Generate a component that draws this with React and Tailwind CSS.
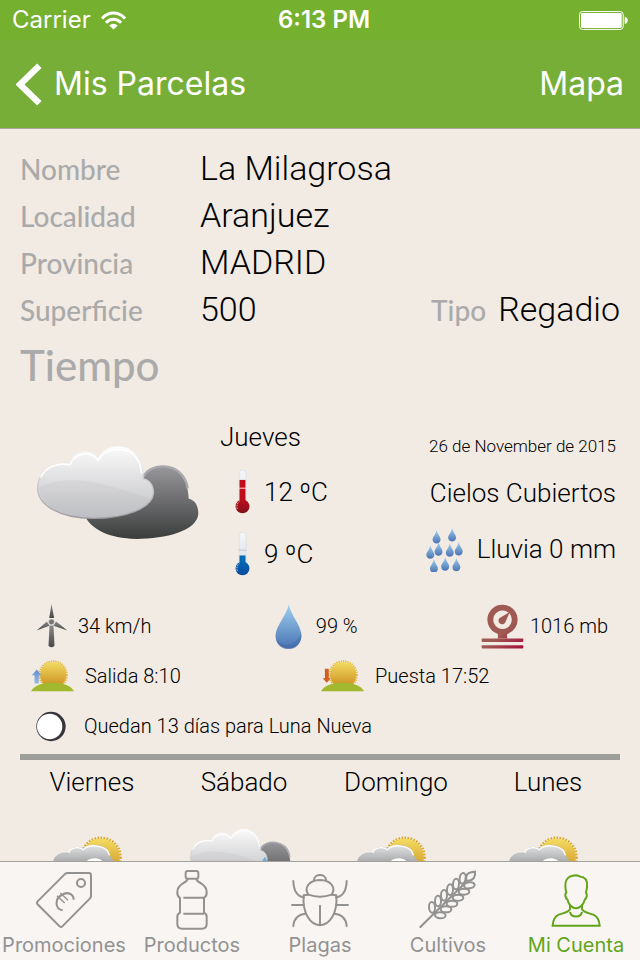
import React from "react";

const fields = [
  { label: "Nombre", value: "La Milagrosa" },
  { label: "Localidad", value: "Aranjuez" },
  { label: "Provincia", value: "MADRID" },
  { label: "Superficie", value: "500", extra: { label: "Tipo", value: "Regadio" } },
];

const forecast = [
  { day: "Viernes", icon: "sun" },
  { day: "Sábado", icon: "rain" },
  { day: "Domingo", icon: "sun" },
  { day: "Lunes", icon: "sun" },
];

const tabs = [
  { name: "Promociones", Icon: TagIcon },
  { name: "Productos", Icon: BottleIcon },
  { name: "Plagas", Icon: BugIcon },
  { name: "Cultivos", Icon: WheatIcon },
  { name: "Mi Cuenta", Icon: UserIcon, active: true },
];

// All the gradients of the page, declared once
function Gradients() {
  const list = [
    ["cloudLight", "#fafafa", "#bfc0c3"],
    ["cloudDark", "#98979b", "#3b3d3c"],
    ["cloudEdge", "#ffffff", "#9b9aa0"],
    ["cloudGray", "#e2e3e4", "#98999b"],
    ["sunDisc", "#f3dc62", "#c98a1c"],
    ["drop", "#9fd0ef", "#4a74b4"],
    ["glass", "#f4f7fa", "#d9e0e8"],
    ["red", "#c00d1c", "#7c1219"],
    ["blue", "#0468b4", "#0b4a9c"],
    ["arrow", "#5f90cc", "#93bbe6"],
    ["steel", "#8a898c", "#48484a"],
  ];
  return (
    <svg className="absolute h-0 w-0" aria-hidden="true">
      <defs>
        {list.map(([id, from, to]) => (
          <linearGradient key={id} id={id} x1="0" y1="0" x2="0" y2="1">
            <stop offset="0" stopColor={from} />
            <stop offset="1" stopColor={to} />
          </linearGradient>
        ))}
        <linearGradient id="gauge" gradientUnits="userSpaceOnUse" x1="60" y1="40" x2="168" y2="175">
          <stop offset="0.55" stopColor="#a05a54" />
          <stop offset="1" stopColor="#a30d3a" />
        </linearGradient>
      </defs>
    </svg>
  );
}

/* Weather */
function CloudShapes() {
  return (
    <>
      <path
        d="M366 182 C376 118 505 112 508 236 C528 240 537 258 537 282 C533 332 440 357 350 357 C268 356 214 328 193 285 Z"
        fill="url(#cloudDark)"
      />
      <path
        d="M372 170 C388 126 494 120 505 205"
        fill="none"
        stroke="#a9a8ae"
        strokeWidth="7"
      />
      <path
        d="M53 205 C53 160 92 121 149 129 C160 92 214 84 234 115 C262 62 371 60 371 176 C388 178 402 194 402 218 C400 264 318 295 220 295 C120 295 53 255 53 205Z"
        fill="url(#cloudLight)"
        stroke="url(#cloudEdge)"
        strokeWidth="4"
      />
      <path
        d="M57 203 C100 178 170 174 240 190 C310 208 350 222 398 236 C384 270 310 291 220 291 C125 291 60 252 57 203Z"
        fill="#b9babd"
        opacity="0.2"
      />
      <path
        d="M62 172 C76 142 108 126 151 133 C162 98 214 89 234 120 C266 70 362 72 366 160"
        fill="none"
        stroke="#fff"
        strokeWidth="5"
      />
    </>
  );
}

function CloudyIcon() {
  return (
    <svg viewBox="51 74 488 286" className="h-[95px] w-[162px]">
      <CloudShapes />
    </svg>
  );
}

function RainyIcon() {
  return (
    <svg viewBox="41 74 515 350" className="h-[77px] w-[113px]">
      <CloudShapes />
      <path d="M391 206 q-20 24 -10 38 q12 10 22 -2 q6 -12 -12 -36Z" fill="#6aaee6" />
    </svg>
  );
}

function SunnyCloudIcon() {
  return (
    <svg viewBox="155 234 243 216" className="h-[72px] w-[81px]">
      <circle
        cx="302"
        cy="322"
        r="58"
        fill="none"
        stroke="#dba92a"
        strokeWidth="9"
        strokeDasharray="5 4"
      />
      <circle cx="302" cy="322" r="56" fill="url(#sunDisc)" />
      <path
        d="M159 336 C162 316 182 306 205 310 C212 290 236 288 249 297 C266 278 326 282 328 318 C334 322 340 334 338 350 H180 Z"
        fill="url(#cloudGray)"
        stroke="#aeb0b3"
        strokeWidth="2"
      />
      <path
        d="M205 309 C212 291 236 289 249 299 C266 280 322 284 327 316"
        fill="none"
        stroke="#fff"
        strokeWidth="4"
      />
      <path d="M255 340 C262 320 304 320 310 340 Z" fill="#fff" />
    </svg>
  );
}

function Thermometer({ hot }) {
  return (
    <svg viewBox="74 150 44 133" className="h-11 w-[15px]">
      <rect x="86" y="151" width="21" height="100" rx="9" fill="url(#glass)" stroke="#cfd8e2" strokeWidth="1.5" />
      <rect x="87" y={hot ? 180 : 221} width="18" height={hot ? 66 : 25} fill={hot ? "#c00d1c" : "#0468b4"} />
      <circle cx="96" cy="260" r="21" fill={hot ? "url(#red)" : "url(#blue)"} />
      <path d="M84 205 H108" stroke={hot ? "#f0d8d8" : "#c3cad3"} strokeWidth="3" />
      <path d="M80 268 C77 258 80 250 87 244" fill="none" stroke="#fff" strokeWidth="2" strokeDasharray="5 3" />
    </svg>
  );
}

const drops = [
  [90, 325], [137, 319], [71, 371], [96, 362], [130, 365], [157, 361], [82, 413], [116, 407], [150, 409],
];

function RainIcon() {
  return (
    <svg viewBox="58 316 112 136" className="h-[45px] w-[37px]">
      {drops.map(([x, y]) => (
        <path
          key={x}
          d={`M${x} ${y} C${x + 3} ${y + 14} ${x + 12} ${y + 20} ${x + 12} ${y + 29} C${x + 12} ${y + 45} ${x - 12} ${y + 45} ${x - 12} ${y + 29} C${x - 12} ${y + 20} ${x - 2} ${y + 14} ${x} ${y}Z`}
          fill="url(#drop)"
        />
      ))}
    </svg>
  );
}

function WindIcon() {
  return (
    <svg viewBox="50 42 95 133" className="h-11 w-8">
      <path d="M90 107 H102 L105 168 Q96 178 87 168 Z" fill="url(#steel)" />
      <path d="M96 42 L104 84 H89 Z" fill="url(#steel)" />
      <path d="M51 122 L82 95 L90 108 Z" fill="url(#steel)" />
      <path d="M144 122 L110 95 L102 108 Z" fill="url(#steel)" />
      <circle cx="96" cy="96" r="9" fill="#77767a" stroke="#e8e3df" strokeWidth="2" />
    </svg>
  );
}

function DropIcon() {
  return (
    <svg viewBox="47 40 80 135" className="h-[45px] w-[27px]">
      <path
        d="M88 41 C93 74 126 104 126 136 C125 160 108 174 87 174 C66 174 49 160 48 136 C48 106 82 74 88 41Z"
        fill="url(#drop)"
      />
      <path d="M49 142 C62 170 106 172 125 128 C130 190 54 190 49 142Z" fill="#3c65a4" opacity="0.4" />
    </svg>
  );
}

function GaugeIcon() {
  return (
    <svg viewBox="40 40 130 135" className="h-[45px] w-[43px]">
      <g fill="url(#gauge)">
        <path d="M105 42 a45 45 0 0 1 14 88 V144 H91 V130 a45 45 0 0 1 14 -88Z M105 59 a28 28 0 1 0 0.1 0Z" fillRule="evenodd" />
        <path d="M127 64 L114 94 A11 11 0 1 1 99 80 Z" />
        <rect x="42" y="144" width="126" height="10" rx="3" />
        <rect x="42" y="164" width="126" height="10" rx="3" />
      </g>
    </svg>
  );
}

function HorizonIcon({ rising }) {
  return (
    <svg viewBox="28 210 136 98" className="h-8 w-[45px]">
      <circle cx="98" cy="256" r="42" fill="none" stroke="#e3b734" strokeWidth="6" strokeDasharray="4 3" />
      <circle cx="98" cy="256" r="40" fill="url(#sunDisc)" />
      <path d="M30 306 C38 290 62 280 96 279 C130 280 154 290 162 306Z" fill="#a2b92f" />
      {rising ? (
        <path d="M48 239 L62 257 H54 V282 H41 V257 H33 Z" fill="url(#arrow)" />
      ) : (
        <path d="M48 280 L35 266 H42 V237 H54 V266 H60 Z" fill="#d0601f" />
      )}
    </svg>
  );
}

function MoonIcon() {
  return (
    <svg viewBox="50 362 90 92" className="h-[31px] w-[30px]">
      <circle cx="95" cy="408" r="44" fill="#35353b" />
      <circle cx="91" cy="408" r="38" fill="#fff" />
    </svg>
  );
}

/* Tab bar */
function TagIcon() {
  return (
    <svg viewBox="102 30 180 180" className="size-[60px]" fill="none" stroke="currentColor" strokeWidth="6">
      <path d="M112 125 L196 41 Q199 39 203 39 H266 Q273 39 273 46 V108 Q273 112 270 115 L187 199 Q183 203 179 199 L112 132 Q109 129 112 125Z" />
      <circle cx="243" cy="69" r="12" />
      <path d="M188 151 C164 146 164 116 185 105 C203 93 221 102 221 119" />
      <path d="M171 107 L194 129 M181 99 L204 121" strokeWidth="4" />
    </svg>
  );
}

function BottleIcon() {
  return (
    <svg viewBox="483 30 180 180" className="size-[60px]" fill="none" stroke="currentColor" strokeWidth="6">
      <rect x="554" y="33" width="38" height="23" rx="6" />
      <path d="M560 57 C558 70 529 70 529 96 Q528 108 537 114 V158 Q528 162 529 172 V192 Q529 206 543 206 H603 Q617 206 617 192 V172 Q618 162 609 158 V114 Q618 108 617 96 C617 70 588 70 586 57" />
      <path d="M547 113 H609 M547 161 H609" />
    </svg>
  );
}

function BugIcon() {
  return (
    <svg viewBox="870 30 180 180" className="size-[60px]" fill="none" stroke="currentColor" strokeWidth="6" strokeLinecap="round">
      <path d="M925 104 C912 84 925 61 960 60 C995 61 1008 84 995 104 C972 112 948 112 925 104Z" />
      <path d="M942 60 C943 40 977 40 978 60" />
      <path d="M911 106 Q918 104 925 104 M995 104 Q1002 104 1009 106 M911 106 C907 160 930 194 960 196 C990 194 1013 160 1009 106" />
      <path d="M960 137 V194" />
      <path d="M880 63 C881 94 892 109 911 112 M876 135 H911 M880 198 C882 172 896 163 917 161" />
      <path d="M1040 63 C1039 94 1028 109 1009 112 M1044 135 H1009 M1040 198 C1038 172 1024 163 1003 161" />
    </svg>
  );
}

const grains = [
  [338, 262, -4], [356, 243, 0], [374, 226, 0], [392, 209, 2], [410, 192, 4], [430, 175, 8],
  [363, 286, 94], [380, 268, 92], [398, 251, 90], [416, 233, 90], [434, 215, 88], [450, 196, 82],
];

function WheatIcon() {
  return (
    <svg viewBox="296 150 180 180" className="size-[60px]" fill="none" stroke="currentColor" strokeWidth="6" strokeLinecap="round">
      <path d="M303 321 L440 186" />
      {grains.map(([x, y, turn]) => (
        <ellipse key={x} cx={x} cy={y} rx="9" ry="16" transform={`rotate(${turn} ${x} ${y})`} fill="#f8f5f2" />
      ))}
      <path d="M441 182 C437 164 446 156 467 155 C468 174 460 184 441 182Z" fill="#f8f5f2" />
    </svg>
  );
}

function UserIcon() {
  return (
    <svg viewBox="678 150 180 180" className="size-[60px]" fill="none" stroke="currentColor" strokeWidth="6">
      <path d="M739 218 C731 185 738 168 768 166 C780 168 783 172 790 172 C803 178 804 195 798 218 C803 222 800 234 795 238 C790 256 778 265 768 265 C758 265 746 256 742 238 C736 234 733 222 739 218Z" />
      <path d="M750 256 V268 C748 276 728 280 716 284 C702 290 699 302 698 317 H839 C838 302 834 290 820 284 C808 280 788 276 786 268 V256" />
      <path d="M750 276 C754 294 782 294 786 276" />
    </svg>
  );
}

function StatusBar() {
  return (
    <div className="relative flex h-10 items-center justify-between bg-[#75b02f] px-3 text-[24px]">
      <div className="flex items-center gap-2.5">
        <span>Carrier</span>
        <svg viewBox="300 32 76 56" className="h-[19px] w-[25px]" fill="none" stroke="currentColor" strokeWidth="9">
          <path d="M303 54 C323 32 353 32 373 54" />
          <path d="M315 67 C328 53 348 53 361 67" />
          <path d="M325 75 Q338 64 351 75 L338 87Z" fill="currentColor" stroke="none" />
        </svg>
      </div>
      <span className="absolute inset-x-0 text-center font-semibold">
        <span className="pl-2">6:13 PM</span>
      </span>
      <svg viewBox="780 33 148 57" className="h-[19px] w-[49px]">
        <rect x="781.5" y="34.5" width="132" height="54" rx="9" fill="none" stroke="#fff" strokeWidth="3" />
        <rect x="786" y="39" width="123" height="45" rx="4" fill="#fff" />
        <path d="M918 50 q9 2 9 11 t-9 11Z" fill="#fff" />
      </svg>
    </div>
  );
}

function Stat({ icon, text, gap = "gap-2.5" }) {
  return (
    <div className={`flex items-center ${gap}`}>
      {icon}
      <span>{text}</span>
    </div>
  );
}

export default function App() {
  return (
    <div className="flex h-screen flex-col bg-[#f2ebe4] font-['Inter',sans-serif] text-black">
      <Gradients />
      <header className="border-b border-[#a9a79f] bg-[#77ae38] text-white">
        <StatusBar />
        <nav className="flex h-[88px] items-center justify-between px-4 text-[32px]">
          <button className="flex items-center gap-3">
            <svg viewBox="50 188 78 128" className="h-[43px] w-[26px]" fill="none" stroke="currentColor" strokeWidth="19">
              <path d="M120 196 L62 252 L120 308" />
            </svg>
            Mis Parcelas
          </button>
          <button>Mapa</button>
        </nav>
      </header>

      <main className="min-h-0 flex-1 overflow-y-auto font-['Roboto',sans-serif] font-light [scrollbar-width:none]">
        {/* Parcel */}
        <dl className="px-5 pt-4">
          {fields.map((field) => (
            <div key={field.label} className="flex h-[47px] items-center">
              <dt className="w-[180px] font-['Lato',sans-serif] text-[28px] font-medium text-[#aaaaaa]">
                {field.label}
              </dt>
              <dd className="text-[34px]">{field.value}</dd>
              {field.extra && (
                <div className="ml-auto flex items-center gap-3">
                  <dt className="font-['Lato',sans-serif] text-[28px] font-medium text-[#aaaaaa]">
                    {field.extra.label}
                  </dt>
                  <dd className="text-[34px]">{field.extra.value}</dd>
                </div>
              )}
            </div>
          ))}
        </dl>
        <h2 className="flex h-16 items-center px-5 font-['Lato',sans-serif] text-[42px] font-medium text-[#aaaaaa]">
          Tiempo
        </h2>

        {/* Today */}
        <section className="flex pt-4 pr-6 pl-5 text-[26px]">
          <div className="w-[200px] pt-8 pl-[17px]">
            <CloudyIcon />
          </div>
          <div>
            <h3 className="flex h-12 items-center">Jueves</h3>
            <p className="flex h-[62px] items-center gap-[14px] pl-[15px]">
              <Thermometer hot /> 12 ºC
            </p>
            <p className="flex h-[62px] items-center gap-[14px] pl-[15px]">
              <Thermometer /> 9 ºC
            </p>
          </div>
          <div className="ml-auto flex flex-col items-end pt-2">
            <p className="flex h-12 items-center pt-1 text-[17px]">26 de November de 2015</p>
            <p className="flex h-12 items-center">Cielos Cubiertos</p>
            <p className="flex h-16 items-center gap-3.5">
              <RainIcon /> Lluvia 0 mm
            </p>
          </div>
        </section>

        <section className="pt-4 text-[20px]">
          <div className="flex h-[50px] items-center justify-between pr-8 pl-9">
            <Stat icon={<WindIcon />} text="34 km/h" />
            <Stat icon={<DropIcon />} text="99 %" gap="gap-3.5" />
            <Stat icon={<GaugeIcon />} text="1016 mb" gap="gap-1.5" />
          </div>
          <div className="grid h-[50px] grid-cols-2 items-center px-[30px]">
            <Stat icon={<HorizonIcon rising />} text="Salida 8:10" />
            <Stat icon={<HorizonIcon />} text="Puesta 17:52" />
          </div>
          <div className="flex h-[50px] items-center gap-[18px] pl-9">
            <MoonIcon />
            <span>Quedan 13 días para Luna Nueva</span>
          </div>
        </section>
        <hr className="mx-5 mt-[3px] h-1.5 border-0 bg-[#9d9d9a]" />

        {/* Next days */}
        <ul className="grid grid-cols-4 px-4 text-[26px]">
          {forecast.map((item) => (
            <li key={item.day} className="flex flex-col items-center">
              <span className="mb-6 flex h-11 items-center">{item.day}</span>
              {item.icon === "sun" ? <SunnyCloudIcon /> : <RainyIcon />}
            </li>
          ))}
        </ul>
      </main>

      <footer className="grid h-[99px] grid-cols-5 border-t border-[#a5a29c] bg-[#f8f5f2]">
        {tabs.map(({ name, Icon, active }) => (
          <button
            key={name}
            className={`flex flex-col items-center pt-2 text-[20px] ${
              active ? "text-[#62a51b]" : "text-[#929292]"
            }`}
          >
            <Icon />
            {name}
          </button>
        ))}
      </footer>
    </div>
  );
}
